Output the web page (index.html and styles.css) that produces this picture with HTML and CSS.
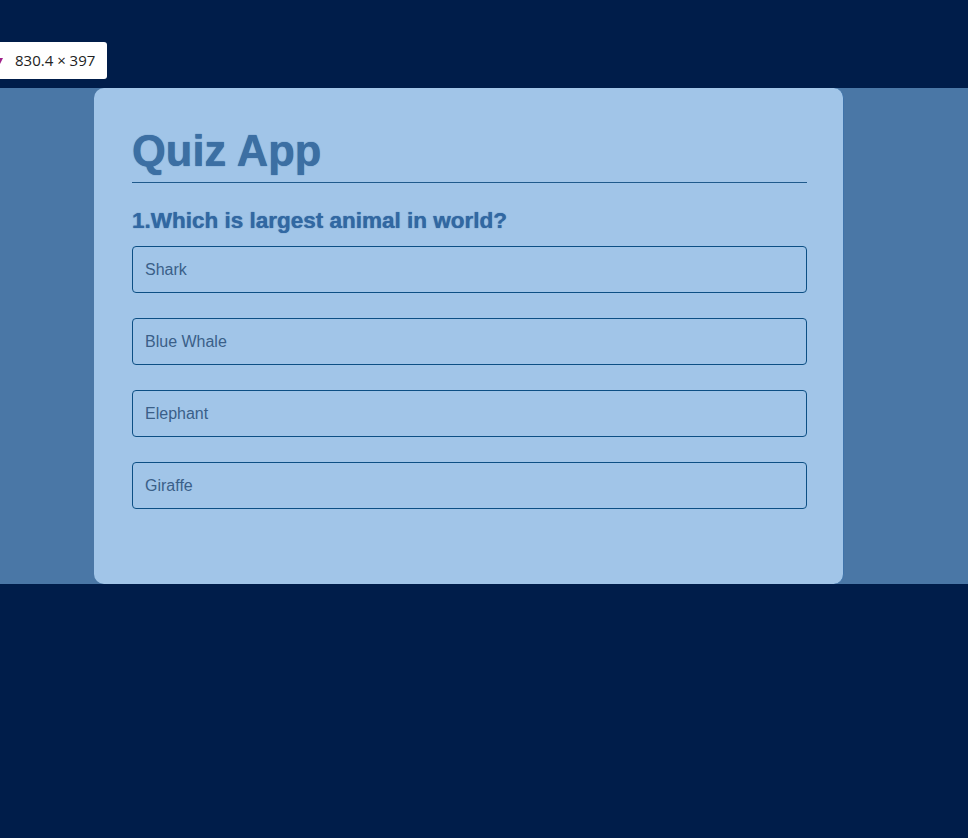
FILE: index.html
```html
<!DOCTYPE html>
<html lang="en">
<head>
<meta charset="utf-8">
<title>Quiz App</title>
<link rel="stylesheet" href="styles.css">
</head>
<body>
  <div class="top">
    <div class="tooltip"><span class="tip-arrow"></span>830.4 × 397</div>
  </div>
  <div class="band">
    <div class="app">
      <h1 class="title">Quiz App</h1>
      <h2 class="question">1.Which is largest animal in world?</h2>
      <ul class="answers">
        <li class="answer">Shark</li>
        <li class="answer">Blue Whale</li>
        <li class="answer">Elephant</li>
        <li class="answer">Giraffe</li>
      </ul>
    </div>
  </div>
</body>
</html>
```
FILE: styles.css
```css
html, body {
  margin: 0;
  padding: 0;
}
body {
  background: #001d4a;
  min-height: 838px;
  font-family: "Liberation Sans", Arial, sans-serif;
}
.top {
  height: 88px;
  position: relative;
}
.tooltip {
  position: absolute;
  left: 0;
  top: 42px;
  width: 107px;
  height: 37px;
  box-sizing: border-box;
  background: #ffffff;
  border-radius: 0 3px 3px 0;
  padding-left: 15px;
  font-family: "Open Sans", "Noto Sans", sans-serif;
  font-size: 15px;
  line-height: 37px;
  color: #222222;
}
.tip-arrow {
  position: absolute;
  left: -3px;
  top: 16px;
  width: 0;
  height: 0;
  border-left: 3px solid transparent;
  border-right: 3px solid transparent;
  border-top: 6px solid #a0208a;
}
.band {
  background: #4a77a6;
  height: 496px;
}
.app {
  margin-left: 94px;
  width: 750px;
  height: 496px;
  box-sizing: border-box;
  background: #a1c5e8;
  border-radius: 10px;
  border-right: 1px solid #3f73aa;
  padding: 39px 36px 0 38px;
}
.title {
  margin: 0;
  font-size: 43.5px;
  font-weight: bold;
  color: #3c6fa3;
  text-shadow: 0 0 1px #2a5f96;
  padding-bottom: 6px;
  border-bottom: 1px solid #1f5a8c;
}
.question {
  margin: 25px 0 12px;
  font-size: 22.5px;
  font-weight: bold;
  color: #3168a3;
  text-shadow: 0 0 1px #3a6598;
}
.answers {
  list-style: none;
  margin: 0;
  padding: 0;
}
.answer {
  border: 1px solid #0c4f84;
  border-radius: 4px;
  padding: 14px 12px;
  line-height: 17px;
  font-size: 16px;
  color: #3a5f88;
  margin-bottom: 25px;
}
```
